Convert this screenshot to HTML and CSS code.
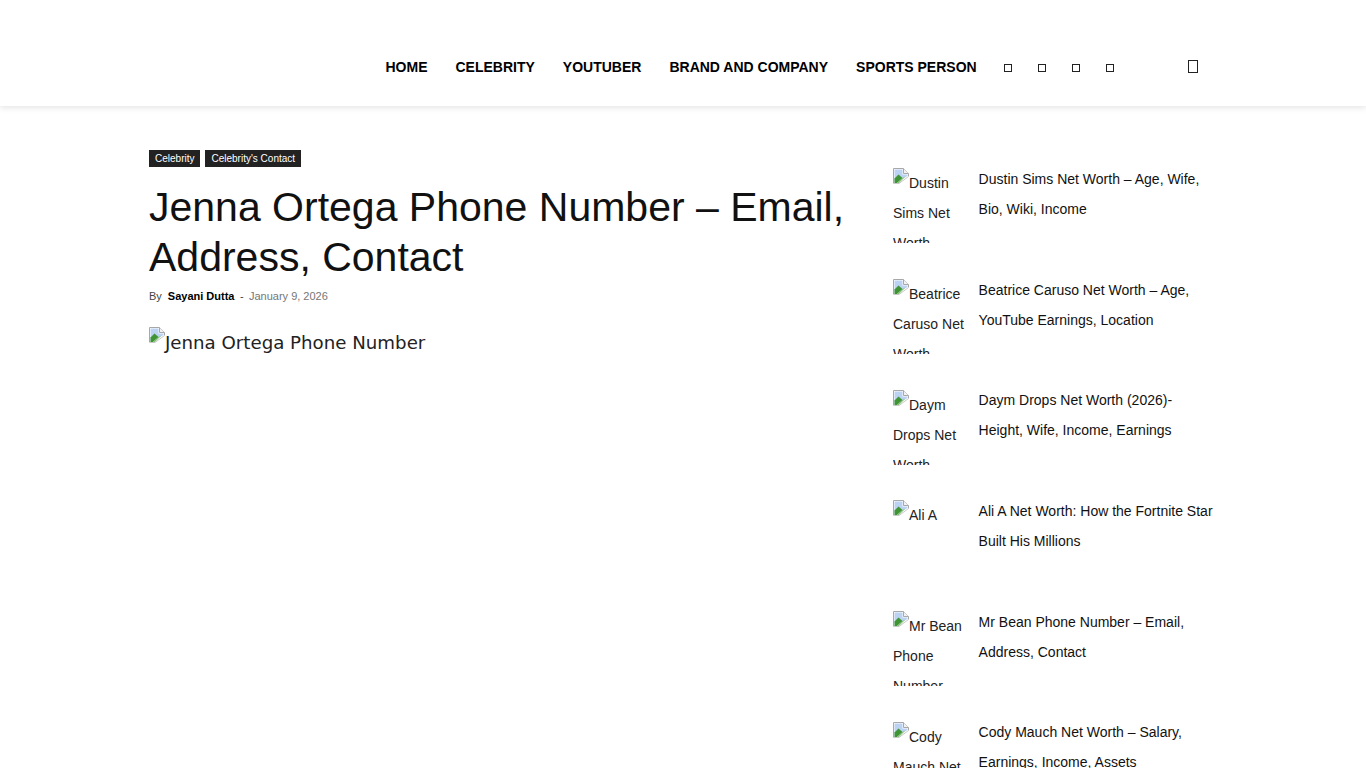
FILE: index.html
```html
<!DOCTYPE html>
<html lang="en">
<head>
    <meta charset="UTF-8">
    <meta name="viewport" content="width=device-width, initial-scale=1.0">
    <title>Jenna Ortega Phone Number – Email, Address, Contact</title>
    <link rel="stylesheet" href="styles.css">
</head>
<body>
    <svg class="sprites" width="0" height="0" aria-hidden="true">
        <symbol id="broken" viewBox="0 0 16 16">
            <path d="M.5 15.500V.5h10l5 5v3" fill="#fff" stroke="#a8a8a8"/>
            <path d="M10.500.5v5h5" fill="#f2f2f2" stroke="#a8a8a8"/>
            <path d="M1.500 1.500h8v5h5v1.500L1.500 15z" fill="#bcd2f2"/>
            <path d="M1.500 15v-4.500l4-4 4 3.500L4 15z" fill="#3f9434"/>
            <path d="M4 15l5.500-5 3-1.500L6 15z" fill="#86c076"/>
            <path d="M1 15.500h5l9.500-7" fill="none" stroke="#c8c8c8"/>
        </symbol>
    </svg>

    <header class="site-header">
        <nav class="menu">
            <a href="#">Home</a>
            <a href="#">Celebrity</a>
            <a href="#">Youtuber</a>
            <a href="#">Brand and Company</a>
            <a href="#">Sports Person</a>
            <span class="social">
                <i class="missing"></i>
                <i class="missing"></i>
                <i class="missing"></i>
                <i class="missing"></i>
            </span>
            <i class="missing search"></i>
        </nav>
    </header>

    <div class="page">
        <main class="article">
            <div class="cats">
                <a href="#">Celebrity</a>
                <a href="#">Celebrity's Contact</a>
            </div>
            <h1>Jenna Ortega Phone Number – Email, Address, Contact</h1>
            <div class="meta">
                <span class="by">By</span>
                <a href="#">Sayani Dutta</a>
                <span class="sep">-</span>
                <time>January 9, 2026</time>
            </div>
            <div class="hero"><svg class="broken"><use href="#broken"/></svg>Jenna Ortega Phone Number</div>
        </main>

        <aside class="sidebar">
            <article class="post">
                <div class="thumb"><svg class="broken"><use href="#broken"/></svg>Dustin Sims Net Worth</div>
                <a href="#">Dustin Sims Net Worth – Age, Wife, Bio, Wiki, Income</a>
            </article>
            <article class="post">
                <div class="thumb"><svg class="broken"><use href="#broken"/></svg>Beatrice Caruso Net Worth</div>
                <a href="#">Beatrice Caruso Net Worth – Age, YouTube Earnings, Location</a>
            </article>
            <article class="post">
                <div class="thumb"><svg class="broken"><use href="#broken"/></svg>Daym Drops Net Worth</div>
                <a href="#">Daym Drops Net Worth (2026)- Height, Wife, Income, Earnings</a>
            </article>
            <article class="post">
                <div class="thumb"><svg class="broken"><use href="#broken"/></svg>Ali A</div>
                <a href="#">Ali A Net Worth: How the Fortnite Star Built His Millions</a>
            </article>
            <article class="post">
                <div class="thumb"><svg class="broken"><use href="#broken"/></svg>Mr Bean Phone Number</div>
                <a href="#">Mr Bean Phone Number – Email, Address, Contact</a>
            </article>
            <article class="post">
                <div class="thumb"><svg class="broken"><use href="#broken"/></svg>Cody Mauch Net Worth</div>
                <a href="#">Cody Mauch Net Worth – Salary, Earnings, Income, Assets</a>
            </article>
        </aside>
    </div>
</body>
</html>
```

FILE: styles.css
```css
html, body {
    height: 100%;
    overflow: hidden;
}
body {
    margin: 0;
    font-family: "Liberation Sans", Arial, sans-serif;
    color: #111;
    background-color: #fff;
}
a {
    color: inherit;
    text-decoration: none;
}
.sprites {
    display: block;
}
.broken {
    width: 16px;
    height: 16px;
    vertical-align: 4px;
}

.site-header {
    height: 106px;
    background-color: #fff;
    box-shadow: 0 2px 6px rgba(0,0,0,0.1);
}
.menu {
    display: flex;
    align-items: center;
    padding: 59px 0 0 385.5px;
    height: 16px;
    font-size: 14px;
    font-weight: 700;
    line-height: 16px;
    text-transform: uppercase;
    color: #000;
}
.menu a {
    margin-right: 28px;
}
.social {
    display: flex;
    gap: 26px;
    margin-left: -1px;
}
.missing {
    display: block;
    box-sizing: border-box;
    width: 8px;
    height: 8px;
    margin-top: 1px;
    border: 1px solid #222;
}
.missing.search {
    width: 10px;
    height: 13px;
    margin: -1px 0 0 74px;
}

.page {
    display: flex;
    padding: 44px 0 0 149px;
}
.article {
    width: 744px;
}
.cats {
    display: flex;
    gap: 5px;
}
.cats a {
    padding: 0 6px;
    height: 17px;
    font-size: 10px;
    line-height: 17px;
    color: #fff;
    background-color: #222;
}
h1 {
    margin: 15px 0 0;
    width: 710px;
    font-size: 41px;
    font-weight: 400;
    line-height: 50px;
    color: #111;
}
.meta {
    display: flex;
    margin-top: 6px;
    font-size: 11px;
    line-height: 16px;
    color: #444;
}
.meta a {
    margin-left: 6px;
    font-weight: 700;
    color: #000;
}
.sep {
    margin: 0 5.4px;
}
.meta time {
    color: #767676;
}
.hero {
    margin-top: 23px;
    font-family: "DejaVu Sans", Verdana, sans-serif;
    font-size: 18.2px;
    line-height: 30px;
    color: #222;
}
.hero .broken {
    vertical-align: 6px;
}

.sidebar {
    padding-top: 18.2px;
}
.post {
    display: flex;
    height: 75px;
    margin-bottom: 35.7px;
    font-size: 14px;
    line-height: 30px;
    color: #111;
}
.thumb {
    flex: none;
    width: 72px;
    height: 75px;
    overflow: hidden;
    color: #222;
}
.post a {
    width: 240px;
    margin: -4.3px 0 0 13.6px;
}
```
